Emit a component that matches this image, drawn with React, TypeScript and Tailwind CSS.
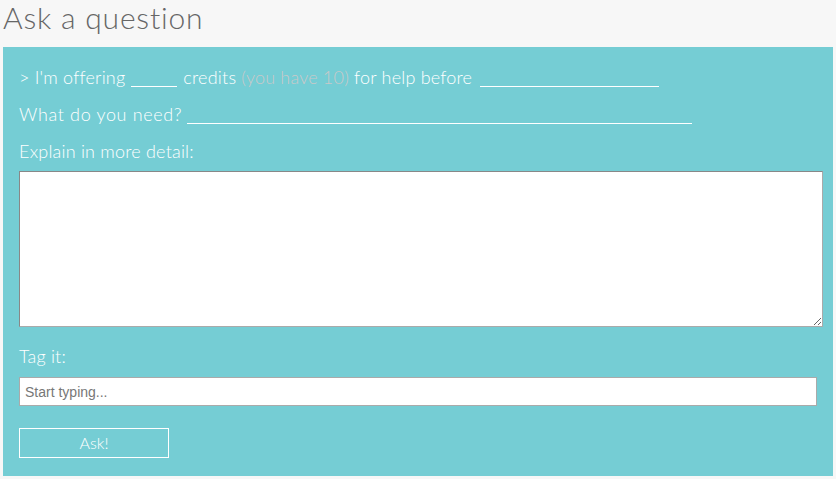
export default function App() {
  return (
    <div className="min-h-[479px] bg-[#f7f7f7] font-['Lato',sans-serif]">
      <h1 className="px-[3px] text-[30px] font-light leading-[35px] tracking-[0.8px] text-[#666]">Ask a question</h1>
      <form
        className="mx-[3px] mt-[12px] flex flex-col bg-[#75cdd4] px-4 pt-[18px] pb-[18px] text-[18px] font-light tracking-[0.2px] text-white"
        onSubmit={(e) => e.preventDefault()}>
        <div className="flex h-[24px] items-end">
          <span className="leading-[24px]">&gt; I'm offering</span>
          <input className="mx-[6px] mb-[2px] w-[46px] border-b border-white bg-transparent outline-none" />
          <span className="leading-[24px]">
            credits <span className="text-[#c9c9c9]">(you have 10)</span> for help before
          </span>
          <input className="ml-[8px] mb-[2px] w-[179px] border-b border-white bg-transparent outline-none" />
        </div>
        <div className="mt-[13px] flex h-[24px] items-end">
          <span className="leading-[24px] tracking-[0.65px]">What do you need?</span>
          <input className="ml-[5px] mb-[2px] w-[505px] border-b border-white bg-transparent outline-none" />
        </div>
        <label className="mt-[13px] leading-[24px]">Explain in more detail:</label>
        <textarea className="mt-[8px] h-[156px] w-[804px] border border-[#888] border-b-[#aaa] border-r-[#aaa] bg-white outline-none" />
        <label className="mt-[17px] leading-[24px]">Tag it:</label>
        <input
          placeholder="Start typing..."
          className="mt-[9px] h-[29px] w-[798px] border border-[#aaa] bg-white px-[5px] font-['Liberation_Sans',sans-serif] text-[14px] font-normal tracking-normal text-[#555] outline-none placeholder:text-[#777]"
        />
        <button
          type="submit"
          className="mt-[22px] h-[30px] w-[150px] border border-white bg-transparent text-[16px] font-light tracking-normal text-white">
          Ask!
        </button>
      </form>
    </div>
  );
}
